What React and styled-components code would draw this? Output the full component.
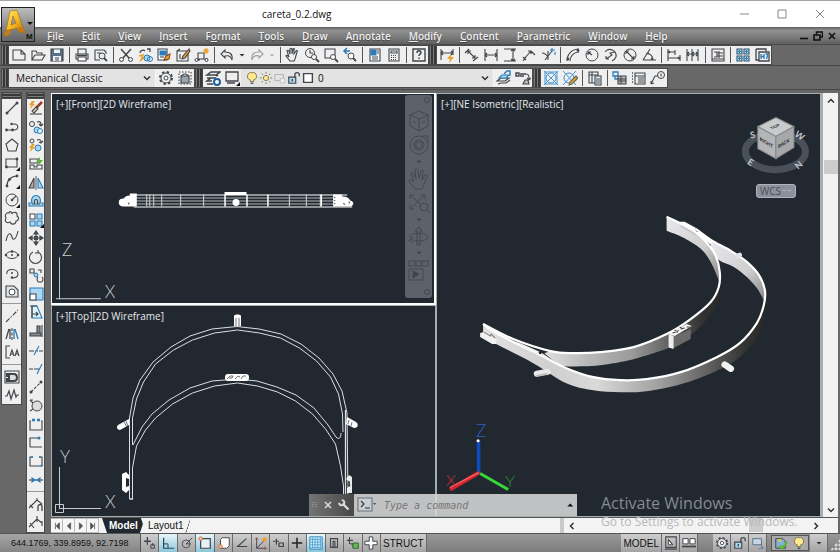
import React from 'react'
import styled, { createGlobalStyle, css } from 'styled-components'

const GlobalStyle = createGlobalStyle`
	* { box-sizing: border-box; }

	body {
		margin: 0;
		font-family: "Open Sans", "Noto Sans", sans-serif;
		font-size: 10px;
		background-color: #686868;
	}

	button, input, select {
		font: inherit;
		color: inherit;
		margin: 0;
		padding: 0;
		border: 0;
		background: none;
	}
`

const INK = '#41464b'
const BLUE = '#2b7cb8'
const SKY = '#a9d8f0'
const GOLD = '#eba12c'

/* eslint-disable react/prop-types */
const P = ( { d, c = INK, f = 'none', w = 1.1, ...rest } ) => (
	<path d={d} stroke={c} fill={f} strokeWidth={w} {...rest}/>
)

const corner = <P d="M16 12v4h-4z" c="none" f="#111"/>
const bolt = <P d="M4 1L1 5h2L2 9l5-5H5l2-3z" c="none" f={GOLD}/>

const icons = {
	new: <P d="M2 3h8l4 4v6H2zM10 3v4h4"/>,
	open: <><P d="M2 13V4h4l1 2h5v2M2 13l3-5h10l-3 5z"/></>,
	save: <><P d="M2 2h12v12H2z" f="#5b6f86"/><P d="M5 2.500h6V6H5zM4 9h8v5H4z" c="none" f="#eef1f4"/><P d="M6 11h4M6 13h4" w={1}/></>,
	print: <><P d="M4 7V2h8v5M2 7h12v5H2z"/><P d="M4 10h8v4H4z" f="#fff"/><P d="M3 8.500h10" w={1.600}/></>,
	preview: <><P d="M7 13H2V3h9l2 2v2M4 6h4"/><circle cx="9" cy="9" r="3" stroke={INK} fill="#dfeaf2"/><P d="M11 11l3 3" w={1.800}/></>,
	cut: <><P d="M3 2l8 9M13 2L5 11" w={1.500}/><circle cx="3.500" cy="12.500" r="2" stroke={INK} fill="none"/><circle cx="12.500" cy="12.500" r="2" stroke={INK} fill="none"/></>,
	copyclip: <><P d="M3 6a3 3 0 0 1 5-2M10 2h3v3" w={1.300}/><P d="M2 9l4-1-2 5 4-3" c={GOLD} w={1.600}/><circle cx="10" cy="11" r="3" stroke={BLUE} fill={SKY}/><circle cx="13" cy="12" r="2.500" stroke={BLUE} fill="none"/></>,
	paste: <><P d="M2 2h9v11H2z" f="#fff"/><P d="M4 4h6v4H4z" f={BLUE} c={BLUE}/><P d="M4 10h4"/><P d="M8 13l2-4 4-2-1 5z" c="#8a4a20" f={GOLD}/></>,
	match: <><P d="M2 4h11v10H2zM2 4l3-2M5 7v5"/><P d="M14 2L8 9l-1 3 3-1 5-7z" f={GOLD}/></>,
	block: <><P d="M4 6h6v6H4zM1 13h5M10 12h4"/><circle cx="2.500" cy="13" r="1.500" stroke={INK} fill="#fff"/><circle cx="12.500" cy="13" r="1.500" stroke={INK} fill="#fff"/><P d="M12 1v6M9 4h6M10 2l4 4M14 2l-4 4" c={GOLD}/></>,
	undo: <P d="M6 3L2 7l4 4V9c4-1 6 0 7 4 1-6-2-8-7-8z"/>,
	redo: <P d="M10 3l4 4-4 4V9c-4-1-6 0-7 4-1-6 2-8 7-8z" c="#9a9da0"/>,
	caret: <P d="M3 6h10l-5 5z" c="none" f="#333"/>,
	caretDim: <P d="M4 7h8l-4 4z" c="none" f="#a0a0a0"/>,
	hand: <P d="M5 14l-4-5c0-1 1-1 2 0l1 1-2-6c0-1 1-1 2 0l1 3V2c0-1 1-1 2 0v5l1-5c1-1 2 0 1 1v4l2-3c1-1 2 0 1 1l-2 7-1 2z"/>,
	zoomRt: <><circle cx="6" cy="6" r="4.500" stroke={INK} fill="none"/><P d="M6 3v3h3"/><circle cx="10" cy="10" r="2.500" stroke={INK} fill="#fff"/><P d="M12 12l3 3" w={1.800}/></>,
	zoomWin: <><P d="M2 2h10v9H2z"/><circle cx="10" cy="10" r="2.500" stroke={INK} fill="#fff"/><P d="M12 12l3 3" w={1.800}/></>,
	zoomPrev: <><P d="M8 4H2M5 1L2 4l3 3" c={BLUE} w={1.500}/><circle cx="9" cy="9" r="3" stroke={INK} fill="#fff"/><P d="M11 11l3 3" w={1.800}/></>,
	props: <><P d="M3 2h10v12H3z" f="#fff"/><P d="M4 3h5v5H4z" c={BLUE} f={BLUE}/><P d="M10 4h2M10 6h2M5 10h6M5 12h6" w={1}/></>,
	calc: <><P d="M3 2h10v12H3z"/><P d="M5 4h6v2H5z" f="#fff"/><P d="M5 8.500h6M5 10.500h6M5 12.500h6" w={1} strokeDasharray="1 1"/></>,
	help: <><P d="M2 2h12v12H2z" w={1.400}/><P d="M6 6c0-3 4-3 4 0 0 1-2 1-2 3M8 10.500v1.500" w={1.500}/></>,
	dimQuick: <><P d="M2 2v11M14 2v6M2 6h12M4 4L2 6l2 2M12 4l2 2-2 2"/><P d="M12 7l-4 5h3l-1 4 5-6h-3z" c="none" f={GOLD}/></>,
	dimAligned: <P d="M4 4l7 7M1 6l4-4M9 14l5-4M4 4h3M4 4v3M11 11H8M11 11V8"/>,
	dimLinear: <P d="M2 2v12M14 2v12M2 8h12M4 6L2 8l2 2M12 6l2 2-2 2"/>,
	dimOrd: <P d="M2 2h12M2 14h12M11 2v12M9 4l2-2 2 2M9 12l2 2 2-2"/>,
	dimArc: <P d="M2 14l3-4M2 10l3 3M3 12L10 4M10 4l4 4M10 4H7M10 4v3"/>,
	dimYx: <><P d="M2 6c3 0 4 1 6 4M8 4v9M12 4L5 13"/><P d="M10 3h5M12 1v4M15 5v3" c={BLUE}/></>,
	dimCurve: <><P d="M2 14C2 7 7 2 14 2M5 14c0-5 4-9 9-9"/><circle cx="3" cy="12" r="1.400" fill={INK}/><circle cx="13" cy="3.500" r="1.400" fill={INK}/></>,
	radius: <><circle cx="8" cy="8" r="6" stroke={INK} fill="none"/><P d="M8 8L4 5M4 5v3M4 5h3"/></>,
	jogged: <P d="M2 5c4-5 12-2 11 5-1 2-2 3-4 4M3 12l6-4-2-2 5-1M3 12v-3M3 12h3"/>,
	diameter: <><circle cx="8" cy="8" r="6" stroke={INK} fill="none"/><P d="M4 4l8 8M4 4v3M4 4h3M12 12V9M12 12H9"/></>,
	angular: <P d="M2 13h13M2 13L9 2M5 7c4-1 7 2 7 6M5 7l3-1M12 13l-2-2"/>,
	baseline: <P d="M2 2v12M9 3v5M2 5h7M2 11h12M14 8v6M4 4L2 5l2 1M12 10l2 1-2 1"/>,
	cont: <P d="M2 2v12M7 2v12M13 2v12M2 7h11M4 5L2 7l2 2M9 5L7 7l2 2M11 5l2 2-2 2"/>,
	space: <P d="M2 2h12v12H2zM4 5h3v5H4M7 6h6M7 9h6M9 4v7M2 12h12"/>,
	grid: <><P d="M2 2h5v5H2zM9 2h5v5H9zM2 9h5v5H2zM9 9h5v5H9z" c="#36506a" f={SKY}/><P d="M4.500 3v3M3 4.500h3M11.500 3v3M10 4.500h3M4.500 10v3M3 11.500h3M11.500 10v3M10 11.500h3" c={BLUE}/></>,
	h7: <><P d="M2 2h10v2M2 2v11h3M5 5h10v9H5z" w={1.300}/><P d="M7 7v5M10 7v5M7 9.500h3M11.500 7H14l-1.500 5" c={BLUE} w={1.300}/></>,
	gear: <><circle cx="8" cy="8" r="6" stroke={INK} strokeWidth="2" strokeDasharray="2.400 2.310" fill="none"/><circle cx="8" cy="8" r="5" stroke={INK} fill="#eee"/><circle cx="8" cy="8" r="2" stroke={INK} fill="#fff"/></>,
	workspace: <><P d="M2 2h12v12H2z" strokeDasharray="1.500 1.500"/><P d="M4 6h8v7H4z" f="#9aa4ad"/><P d="M4 6l3-2h2l3 2"/></>,
	layers: <><P d="M6 2h9l-4 3H2zM11 6l2-1M2 8h7M11 8H6L2 11h5M2 14h6" w={1.400}/><circle cx="12" cy="12" r="3" fill="#fff" stroke="#1b5f9a" strokeWidth="2"/></>,
	screen: <><P d="M2 2h12v9H2z" w={1.300}/><P d="M3 13h8" w={1.500}/>{corner}</>,
	bulb: <><P d="M8 2a4 4 0 0 1 2 8v2H6v-2a4 4 0 0 1 2-8z" c="#83764e" f="#ffe98f"/><P d="M6.500 14h3" w={1.500}/></>,
	sun: <><circle cx="8" cy="8" r="3" stroke="#83764e" fill="#ffe98f"/><P d="M8 1v2M8 13v2M1 8h2M13 8h2M3 3l1.500 1.500M11.500 11.500L13 13M13 3l-1.500 1.500M4.500 11.500L3 13" c="#83764e"/></>,
	vpFreeze: <><P d="M2 4h10v7H2z" c="#b3b3b3"/><circle cx="11" cy="11" r="3" stroke="#b3b3b3" fill="#eee"/></>,
	unlock: <><P d="M2 7h8v7H2z" f={SKY} w={1.300}/><P d="M9 7V4c0-3 5-3 5 0v2M6 9v3" w={1.500}/></>,
	swatch: <P d="M3 3h10v10H3z" f="#fff" w={1.600}/>,
	layerSt: <><P d="M1 11l4-3h8l-4 3zM2 14l3-1h5l4-3" w={1.200}/><P d="M3 8l3-3h7l-3 3z" f={SKY} c={BLUE}/><P d="M8 4l3-3h3v5" c={BLUE} w={1.400}/></>,
	layerPrev: <><P d="M1 3h3v3H1zM5 4h6M5 6h4" w={1.400}/><P d="M11 4c3 0 3 2 3 5M12 8l2 2 2-2"/><P d="M8 14l2-4h3l1 4z" f="#bbb"/></>,
	center: <><circle cx="8" cy="8" r="5" stroke="#3a8fd0" fill="none"/><P d="M1 1l14 14M15 1L1 15M2 2h12v12H2z" c="#3a8fd0" w={0.900}/></>,
	centerEd: <><circle cx="7" cy="8" r="5" stroke="#3a8fd0" fill="none"/><P d="M1 1l13 14M14 1L1 15" c="#3a8fd0" w={0.900}/><P d="M14 6l-6 6-1 3 3-1 6-6z" c="#665" f={GOLD}/></>,
	bom: <><P d="M2 2h9v11H2zM2 5h9M5 2v11"/><P d="M8 6h6v9H8z" f="#d9e8f2"/><P d="M9 9h4M9 11h4M9 13h4" w={0.900}/></>,
	partRef: <><P d="M1 2h5v4H1zM3 6v3h4" c={BLUE} w={1.300}/><P d="M6 6h8v8H6zM6 9h8M6 11h8M9 6v8" f="#bbb"/></>,
	partList: <><P d="M4 3h10v11H4zM4 6h10M7 8h6M7 10h6M7 12h6"/><P d="M1 3h1M1 6h1M1 9h1M1 12h1" w={1.500}/></>,
	balloon: <><circle cx="11" cy="5" r="3.500" stroke={INK} fill="none"/><P d="M11 3.500v3M1 14l4-8h3M1 14v-3M1 14l3-1"/></>,

	line: <><P d="M3 13L13 3"/><circle cx="3" cy="13" r="1.500" fill={INK}/><circle cx="13" cy="3" r="1.500" fill={INK}/></>,
	pline: <><P d="M2 12h8c5 0 5-6 0-6H8"/><circle cx="2.500" cy="12" r="1.400" fill={INK}/><circle cx="8.500" cy="12" r="1.400" fill={INK}/><circle cx="7.500" cy="6" r="1.200" fill={INK}/></>,
	polygon: <P d="M8 2l6 5-2 7H4L2 7z"/>,
	rect: <><P d="M2 4h11v8H2z"/><circle cx="2.500" cy="12" r="1.400" fill={INK}/><circle cx="13" cy="4" r="1.400" fill={INK}/>{corner}</>,
	arc: <><P d="M3 13C3 7 7 3 13 3"/><circle cx="3" cy="13" r="1.400" fill={INK}/><circle cx="5.500" cy="6.500" r="1.400" fill={INK}/><circle cx="13" cy="3" r="1.400" fill={INK}/>{corner}</>,
	circle: <><circle cx="8" cy="8" r="6" stroke={INK} fill="none"/><circle cx="8" cy="8" r="1.300" fill={INK}/><P d="M8 8l4-4"/>{corner}</>,
	revcloud: <P d="M8 4c1-3 6-2 5 2 3 2 1 5-1 5 0 4-5 4-6 1-3 2-6-1-4-4-2-3 1-6 3-5 0-2 3-2 3 1z"/>,
	spline: <P d="M2 13C4 3 7 5 8 9s4 3 6-6"/>,
	ellipse: <><ellipse cx="8" cy="8" rx="6" ry="3.500" stroke={INK} fill="none"/><circle cx="2" cy="8" r="1.300" fill={INK}/><circle cx="8" cy="8" r="1" fill={INK}/><circle cx="14" cy="8" r="1.300" fill={INK}/><circle cx="8" cy="4.500" r="1.300" fill={INK}/></>,
	ellArc: <><P d="M3 9c-2-6 11-6 11 0 0 3-3 4-6 4"/><circle cx="8" cy="12.500" r="1.300" fill={INK}/><circle cx="8" cy="8" r="1" fill={INK}/></>,
	region: <><P d="M2 3h8l4 4v7H2z" f="#dfe5e8"/><circle cx="8" cy="9" r="3" stroke={INK} fill="#fff"/></>,
	cline: <P d="M2 14L14 2" strokeDasharray="5 1.500 1.500 1.500"/>,
	symline: <><P d="M8 2v12" strokeDasharray="3 1.500"/><P d="M5 3L2 13M6 3v10" w={1.300}/><P d="M11 3l3 10M10 3v10" c={BLUE} w={1.300}/></>,
	section: <P d="M6 2H2v12h4M6 12l2-6 2 6M7 10h2M11 12l2-6 2 6M12 10h2"/>,
	hidesit: <><P d="M1 2h14v12H1z"/><P d="M3 5h7c4 0 4 7 0 7H3v-2h2V7H3z" f="#ddd" w={2}/></>,
	zigzag: <P d="M1 9h2l2-5 2 8 3-9 2 7 1-2h2" w={1.200}/>,

	erase: <><P d="M4 1L1 5h2L2 9l5-5H5l2-3z" c="none" f={GOLD}/><P d="M14 2L8 8" c="#a33b22" w={2.500}/><P d="M8 7l2 2-4 4-2-2z" f="#e6c9b9"/><P d="M2 14h12" /></>,
	copy: <><circle cx="4" cy="5" r="2.500" stroke={INK} fill="none"/><P d="M9 3c3-1 4 0 4 3M11 5l2 2 2-2"/><circle cx="9" cy="11" r="3" stroke={BLUE} fill={SKY}/><circle cx="12" cy="12" r="2.500" stroke={BLUE} fill="#e4f3fb"/></>,
	pcopy: <><circle cx="4" cy="4" r="2" stroke={INK} fill="none"/><P d="M9 3c3-1 4 0 4 2M11 5l2 1 2-2"/><g transform="translate(0 6)">{bolt}</g><circle cx="10" cy="11" r="3" stroke={BLUE} fill={SKY}/></>,
	pview: <><P d="M2 3h8v4H2zM2 13h12V9H9v2H6V9H2z"/><P d="M12 1L8 6h3l-1 4 5-6h-3z" c="none" f="#5db33c"/></>,
	mirror: <><P d="M6 3v10H1z" f="#aaa"/><P d="M10 3v10h5z" c={BLUE} f={SKY}/><P d="M8 1v14" w={0.900}/></>,
	offset: <><P d="M1 13h14v-3h-3c3-10-11-10-8 0H1z" c={BLUE} f={SKY}/><P d="M4 11h3c-3-6 5-6 2 0h3"/></>,
	array: <><P d="M2 2h5v5H2z" f="#fff"/><P d="M9 2h5v5H9zM2 9h5v5H2zM9 9h5v5H9z" c={BLUE} f={SKY}/>{corner}</>,
	move: <P d="M8 1L6 4h4zM8 15l-2-3h4zM1 8l3-2v4zM15 8l-3-2v4zM6.500 6.500h3v3h-3zM8 3v3M8 10v3M3 8h3M10 8h3" w={1.200} f="#555"/>,
	rotate: <P d="M10 3a6 6 0 1 1-5 0M10 1v3H7"/>,
	powerScale: <><P d="M2 2h4v4H2zM6 6l3 3"/><circle cx="8" cy="8" r="2" stroke={BLUE} fill={SKY}/><P d="M10 3h3v3M14 10a3 3 0 1 1-4 0"/></>,
	scale: <><P d="M2 2h13v12H2z" c={BLUE} f={SKY}/><P d="M2 8h6v6H2z" f="#fff"/></>,
	stretch: <><P d="M4 2h5l5 12H4z" c={BLUE} f="#dff0fa"/><P d="M2 2h7M4 2v12M4 10h6M8 8l2 2-2 2"/></>,
	align: <><P d="M9 3h3v7H9zM2 10h11v3H2z" f="#888"/><P d="M14 2v12"/></>,
	trim: <><P d="M1 9h4M11 9h4" w={1.200}/><P d="M5 9h6" strokeDasharray="1 1"/><P d="M11 4l-5 9" c={BLUE}/></>,
	extend: <><P d="M1 9h4M6 9h5" w={1.200}/><P d="M14 4L9 14" c={BLUE}/></>,
	breakPt: <><P d="M3 13L13 3" strokeDasharray="3 1.500"/><circle cx="3" cy="13" r="1.500" fill={INK}/><circle cx="13" cy="3" r="1.500" fill={INK}/></>,
	hole: <><circle cx="9" cy="9" r="5" stroke={INK} fill="#ddd"/><P d="M2 3h3M2 14l3-2M2 3l3 3"/></>,
	breakAt: <><P d="M3 5H2v9h12V5h-1"/><P d="M4 4h3M9 4h3" c={BLUE} w={2.500}/></>,
	join: <><P d="M2 13V4h8M2 13h12"/><circle cx="11" cy="4" r="1.500" fill={BLUE}/></>,
	chamfer: <><P d="M3 4H2v9h12V4h-1"/><P d="M4 3v2M12 3v2M13 13l1-1" c={BLUE} w={1.800}/></>,
	merge: <><P d="M1 8h14"/><P d="M4 6l3 2-3 2zM12 6L9 8l3 2z" c={BLUE} f={BLUE}/></>,
	dimN: <><P d="M1 12l8-8 5 4M2 9l3 3M9 2v3"/><P d="M10 15v-5c1-2 4-2 4 0v5" w={1.300}/></>,
	dimE: <P d="M1 12l8-8 5 4M2 8l4 5M9 1v6M14 6v5"/>,

	infer: <><P d="M5 1v9M1 6h8" w={1.500}/><P d="M9 10h4v4H9zM11 8v3"/></>,
	snapGrid: <><P d="M3 2v12h12" c="#2a4a5a" w={1.400}/><P d="M3 9h5v5" c="#2a4a5a"/></>,
	polar: <><circle cx="7" cy="9" r="4.500" stroke={INK} fill="none"/><P d="M7 9l7-7M7 9h5"/></>,
	osnap: <><P d="M3 3h11v11H3z" f="#e7f2f7" w={1.400}/><circle cx="3" cy="3" r="2" stroke="#d06030" fill="#ffc9a8"/></>,
	osnap3: <><P d="M4 4l2-2h8v9l-3 3H4z" f="#fff"/><circle cx="4" cy="12" r="2" stroke="#d06030" fill="#ffc9a8"/></>,
	angle: <P d="M13 3L3 12h11" w={1.300}/>,
	ucs: <><P d="M3 2v12h11M3 14L12 5" c="#445"/><circle cx="12" cy="4" r="2.500" fill={GOLD}/><P d="M1 4l2-2 2 2M12 12l2 2-2 2" c="#c05030"/></>,
	dyn: <P d="M1 6h7M5 3v7M8 8h5v4H8z" w={1.400}/>,
	lwt: <P d="M8 2v12M2 8h12" w={1.700} c="#222"/>,
	tpy: <><P d="M1 1h14v14H1z" c={BLUE} f="#d5ecf8"/><P d="M2 4h12M2 7h12M2 10h12M2 13h12M4 2v12M7 2v12M10 2v12M13 2v12" c="#4fa3d1" w={1}/></>,
	qp: <P d="M4 3h8v10H4zM7 6h2v7H7z" w={1.300}/>,
	sc: <><P d="M1 5h7M4 1v8M5 9h3v4" w={1.200}/><P d="M8 8h6v6H8z" c="#2d6e2d" f="#6ab85d"/></>,
	am: <P d="M6 1h4v5h5v4h-5v5H6v-5H1V6h5z" f="#fff"/>,
	modelSp: <><P d="M2 1h12v12H2zM1 15h14" w={1.200}/><P d="M5 4v6h5zM5 4l5 6" f="#fff"/></>,
	layouts: <><P d="M1 3h6v6H1zM9 3h6v6H9z" f="#fff"/><P d="M0 12h16" w={2}/></>,
	annot: <><P d="M2 3h10v7H2z" f="#c9d5e2" c="#56708c"/><P d="M12 8v3l2 3h-3l-2 1" c="#56708c"/></>,
	tray: <><P d="M2 3h8l3 3v8H2z" f="#7fb2d9"/><P d="M3 4l5 4V3z" f="#e8c14c" c="none"/><P d="M6 11l3 3 6-7" c="#5ebb2f" w={2.600}/></>,
	wrench: <><P d="M6 6l8 8" c="#ddd" w={3}/><P d="M5 1.500a3.500 3.500 0 1 1-3.500 3.500" c="#ddd" w={2.400}/></>,
	prompt: <><P d="M1 1h14v13H1z" c="#6a747e" f="#c9ced3"/><P d="M4 4l3 3-3 3M8 11h5" c="#333"/></>
}

const Glyph = styled.svg`
	display: block;
	flex: none;
	width: ${props => props.$size || 14}px;
	height: ${props => props.$size || 14}px;
`

const Icon = ( { name, size } ) => (
	<Glyph $size={size} viewBox="0 0 16 16" aria-hidden="true">{icons[name]}</Glyph>
)

const Shell = styled.div`
	display: flex;
	flex-direction: column;
	position: relative;
	height: 100vh;
	min-height: 480px;
	border-top: 1px solid #a6a6a6;
	background-color: #686868;
	overflow: hidden;
`

const TitleBar = styled.header`
	flex: none;
	display: grid;
	grid-template-columns: 1fr auto 1fr;
	align-items: center;
	height: 26px;
	padding-left: 40px;
	background-color: #fff;
	color: #111;
`

const Title = styled.h1`
	margin: 0;
	font-size: 10px;
	font-weight: 400;
	grid-column: 1 / 4;
	grid-row: 1;
	padding-left: 222px;
`

const WindowButtons = styled.div`
	grid-column: 3;
	grid-row: 1;
	display: flex;
	justify-content: flex-end;
	padding-right: 1px;
`

const WindowButton = styled.button`
	display: grid;
	place-items: center;
	width: 38px;
	height: 24px;
`

const AppButton = styled.button`
	position: absolute;
	top: 6px;
	left: 1px;
	width: 34px;
	height: 35px;
	border: 1px solid #222;
	background: linear-gradient(#bdbdbd, #858585 60%, #666);
	z-index: 2;
`

const MenuBar = styled.nav`
	flex: none;
	display: flex;
	align-items: center;
	height: 18px;
	padding-left: 47px;
	background: linear-gradient(#5d5d5d, #929292 20%, #7b7b7b 60%, #5f5f5f);
	border-bottom: 1px solid #4b4b4b;
	color: #f0f0f0;
`

const MenuItem = styled.button`
	font-size: 10px;
	font-weight: 600;
	line-height: 16px;
	margin-right: 18px;
	text-shadow: 0 1px 1px #444;
`

const MdiButtons = styled.div`
	display: flex;
	gap: 4px;
	margin-left: auto;
	padding-right: 3px;
	color: #111;
`

const ToolRow = styled.div`
	flex: none;
	display: flex;
	align-items: center;
	height: ${props => props.$height}px;
	padding-left: 1px;
	border-bottom: 1px solid #474747;
`

const Grip = styled.span`
	flex: none;
	background: repeating-linear-gradient(${props => props.$across ? '180deg' : '90deg'}, #7a7a7a 0 1px, #383838 1px 3px);
	border: 1px solid #4a4a4a;
	${props => props.$across ? css`height: 7px;` : css`width: 8px; height: 20px;`}
`

const Panel = styled.div`
	display: flex;
	align-items: center;
	height: 20px;
	border: 1px solid #4a4a4a;
	border-width: 1px 1px 1px 0;
	background-color: #efefef;
	${props => props.$shrink && css`min-width: 0; flex: 0 1 330px;`}
`

const ToolButton = styled.button`
	flex: none;
	display: grid;
	place-items: center;
	width: ${props => props.$narrow ? 11 : 19}px;
	height: 18px;
`

const Separator = styled.span`
	flex: none;
	width: 6px;
	height: 16px;
	background: linear-gradient(#555, #555) center / 1px 100% no-repeat;
`

const Combo = styled.label`
	display: flex;
	align-items: center;
	flex: ${props => props.$wide ? '1 1 auto' : '0 0 147px'};
	min-width: 0;
	height: 18px;
	padding: 0 4px;
	background-color: #e3e3e3;
	border-right: 1px solid #f8f8f8;
	color: #111;
`

const Select = styled.select`
	appearance: none;
	flex: 1;
	min-width: 0;
	height: 18px;
	padding-left: 3px;
	font-size: 10px;
	outline: 0;
`

const Workspace = styled.main`
	flex: 1;
	min-height: 0;
	display: flex;
	padding-top: 2px;
	gap: 4px;
	padding-right: 2px;
	padding-left: 1px;
`

const SideBar = styled.div`
	flex: none;
	width: ${props => props.$width}px;
	height: ${props => props.$height};
	display: flex;
	flex-direction: column;
	border: 1px solid #4a4a4a;
	border-top: 0;
	background-color: #efefef;
`

const SideButton = styled.button`
	flex: 1 1 0;
	min-height: 0;
	display: grid;
	place-items: center;
`

const SideRule = styled.span`
	flex: none;
	height: 6px;
	background: linear-gradient(#999, #999) center / 100% 1px no-repeat;
`

const Canvas = styled.div`
	flex: 1;
	min-width: 0;
	margin-left: 2px;
	display: grid;
	grid-template-columns: 1fr 15px;
	grid-template-rows: 1fr 16px;
	position: relative;
	padding-top: 1px;
`

const Views = styled.div`
	display: grid;
	grid-template-columns: 1fr 1fr;
	grid-template-rows: 1fr 1fr;
	min-width: 0;
	min-height: 0;
	border-right: 2px solid #a5adad;
	background-color: #a5adad;
`

const View = styled.section`
	position: relative;
	min-width: 0;
	min-height: 0;
	overflow: hidden;
	border: 1px solid ${props => props.$active ? '#fff' : '#a5adad'};
	border-width: ${props => props.$active ? '1px 2px 2px 1px' : '1px 1px 1px 1px'};
	background-color: #212830;
	grid-row: ${props => props.$tall ? 'span 2' : 'auto'};
	order: ${props => props.$order};
`

const ViewLabel = styled.button`
	position: absolute;
	top: 3px;
	left: 4px;
	font-size: 10px;
	line-height: 14px;
	color: #e6e8ea;
`

const Drawing = styled.svg`
	display: block;
	width: 100%;
	height: 100%;

	text {
		font-family: Lato, "Liberation Sans", sans-serif;
		font-weight: 300;
	}

	.compass text {
		font-weight: 700;
	}
`

const NavBar = styled.div`
	position: absolute;
	top: 1px;
	right: 2px;
	width: 27px;
	height: 203px;
	max-height: 98%;
	border-radius: 3px;
	background-color: #5c616a;
`

const VScroll = styled.div`
	display: flex;
	flex-direction: column;
	align-items: center;
	justify-content: space-between;
	background-color: #f2f2f2;
	color: #222;
`

const ScrollButton = styled.button`
	display: grid;
	place-items: center;
	width: 15px;
	height: 15px;
`

const ThumbTrack = styled.div`
	flex: 1;
	align-self: stretch;
	display: flex;
	flex-direction: ${props => props.$vertical ? 'column' : 'row'};
`

const Thumb = styled.span`
	width: 14px;
	height: 14px;
	margin: ${props => props.$offset};
	background-color: #cdcdcd;
`

const BottomRow = styled.div`
	grid-column: 1 / 3;
	display: flex;
	align-items: center;
	background-color: #f3f3f3;
	border-top: 1px solid #555;
`

const TabNav = styled.button`
	display: grid;
	place-items: center;
	width: 12px;
	height: 15px;
	background-color: #f6f6f6;
	border: 1px solid #bbb;
	border-left: 0;
`

const Tab = styled.button`
	height: 15px;
	padding: 0 7px;
	margin-left: ${props => props.$active ? 3 : -4}px;
	font-family: "Liberation Sans", sans-serif;
	font-size: 10px;
	line-height: 14px;
	font-weight: ${props => props.$active ? 700 : 400};
	color: ${props => props.$active ? '#fff' : '#111'};
	background-color: ${props => props.$active ? '#212830' : '#f3f3f3'};
	clip-path: polygon(0 0, 100% 0, calc(100% - 5px) 100%, 5px 100%);
`

const TabSlash = styled.span`
	width: 5px;
	height: 15px;
	margin-left: -5px;
	background: linear-gradient(108deg, transparent 45%, #555 46% 60%, transparent 61%);
`

const HScroll = styled.div`
	flex: 0 0 263px;
	height: 15px;
	margin-left: auto;
	margin-right: 15px;
	display: flex;
	align-items: center;
	border-left: 4px solid #cacaca;
`

const CommandLine = styled.form`
	position: absolute;
	left: 258px;
	bottom: 17px;
	width: 268px;
	height: 22px;
	display: flex;
	align-items: stretch;
	background-color: rgba(214, 214, 214, .88);
`

const CommandTools = styled.div`
	flex: 0 0 45px;
	display: flex;
	align-items: center;
	gap: 4px;
	padding-left: 3px;
	background: linear-gradient(90deg, #747474, #484848);
`

const CommandButton = styled.button`
	display: grid;
	place-items: center;
`

const CommandInput = styled.input`
	flex: 1;
	min-width: 0;
	padding-left: 8px;
	font: italic 10px "DejaVu Sans Mono", monospace;
	outline: 0;

	&::placeholder {
		color: #777;
		opacity: 1;
	}
`

const Watermark = styled.div`
	position: absolute;
	right: 35px;
	bottom: 3px;
	width: 202px;
	pointer-events: none;
	white-space: nowrap;
`

const WatermarkTitle = styled.p`
	margin: 0;
	font-size: 16px;
	line-height: 22px;
	color: #858b91;
`

const WatermarkText = styled.p`
	margin: 0;
	font-size: 12px;
	line-height: 16px;
	color: #b7b9bb;
`

const StatusBar = styled.footer`
	flex: none;
	display: flex;
	align-items: center;
	height: 19px;
	border-top: 1px solid #555;
	background: linear-gradient(#999, #7c7c7c);
	color: #111;
	font-family: "Liberation Sans", sans-serif;
	font-size: 10px;
`

const Coords = styled.output`
	flex: 0 0 141px;
	padding-left: 11px;
	font-size: 9px;
	line-height: 18px;
	background: linear-gradient(#a5a5a5, #858585);
	border-right: 1px solid #555;
`

const StatusGroup = styled.div`
	display: flex;
	height: 18px;
	flex: ${props => props.$width ? `0 0 ${props.$width}px` : 'none'};
	margin-left: ${props => props.$end ? 'auto' : `${props.$gap || 0}px`};
`

const StatusButton = styled.button`
	flex: 1 1 auto;
	min-width: 18px;
	display: grid;
	place-items: center;
	padding: 0 ${props => props.$text ? 2 : 0}px;
	font-size: 10px;
	border-right: 1px solid #6a6a6a;
	background: ${props => props.$on ? 'linear-gradient(#e8f6fb, #8cc7da)' : 'linear-gradient(#cfcfcf, #a3a3a3)'};
`

const Tray = styled.div`
	display: flex;
	align-items: center;
	gap: 4px;
	width: 38px;
	height: 16px;
	margin-left: 4px;
	padding: 0 2px;
	border: 1px solid #555;
	background-color: #aaa;
`

const ResizeGrip = styled.span`
	width: 10px;
	height: 12px;
	margin: 3px 0 0 2px;
	clip-path: polygon(100% 0, 100% 100%, 0 100%);
	background: radial-gradient(#ddd 1px, transparent 2px) 0 0 / 4px 4px;
`

const menus = [
	[ 'F', 'ile' ], [ 'E', 'dit' ], [ 'V', 'iew' ], [ 'I', 'nsert' ], [ 'F', 'o', 'rmat' ], [ 'T', 'ools' ], [ 'D', 'raw' ],
	[ 'A', 'n', 'notate' ], [ 'M', 'odify' ], [ 'C', 'ontent' ], [ 'P', 'arametric' ], [ 'W', 'indow' ], [ 'H', 'elp' ]
]

const standard = [ 'new', 'open', 'save', '|', 'print', 'preview', '|', 'cut', 'copyclip', 'paste', 'match', 'block', '|', 'undo', 'caret', 'redo', 'caretDim', '|', 'hand', 'zoomRt', 'zoomWin', 'zoomPrev', '|', 'props', 'calc', '|', 'help' ]
const dimension = [ 'dimQuick', '|', 'dimAligned', 'dimLinear', 'dimOrd', 'dimArc', 'dimYx', '|', 'dimCurve', 'radius', 'jogged', 'diameter', 'angular', '|', 'baseline', 'cont', '|', 'space', '|', 'grid', 'h7' ]
const draw = [ 'line', 'pline', 'polygon', 'rect', 'arc', 'circle', 'revcloud', 'spline', 'ellipse', 'ellArc', 'region', '|', 'cline', 'symline', 'section', '|', 'hidesit', 'zigzag' ]
const modify = [ 'erase', 'copy', 'pcopy', 'pview', 'mirror', 'offset', 'array', 'move', 'rotate', 'powerScale', 'scale', 'stretch', 'align', 'trim', 'extend', 'breakPt', 'hole', 'breakAt', 'join', 'chamfer', 'merge', '|', 'dimN', 'dimE' ]
const toggles = [ 'infer', 'snapGrid', 'polar', 'osnap', 'osnap3', 'angle', 'ucs', 'dyn', 'lwt', 'tpy', 'qp', 'sc', 'am' ]
const toggled = [ 'snapGrid', 'osnap', 'tpy' ]

const Tools = ( { items } ) => items.map( ( name, i ) => (
	name === '|'
		? <Separator key={i}/>
		: <ToolButton key={i} aria-label={name} $narrow={name.startsWith( 'caret' )}><Icon name={name} size={name.startsWith( 'caret' ) ? 8 : 16}/></ToolButton>
) )

const Side = ( { items, width, height } ) => (
	<SideBar $width={width} $height={height}>
		<Grip $across/>
		{items.map( ( name, i ) => (
			name === '|' ? <SideRule key={i}/> : <SideButton key={i} aria-label={name}><Icon name={name} size={16}/></SideButton>
		) )}
	</SideBar>
)

const Chevron = ( { turn = 0 } ) => (
	<Glyph $size={8} viewBox="0 0 8 8" aria-hidden="true">
		<path d="M1 2.500l3 3 3-3" fill="none" stroke="#333" strokeWidth="1.500" transform={`rotate(${turn} 4 4)`}/>
	</Glyph>
)

const Logo = () => (
	<svg width="32" height="33" viewBox="0 0 32 33" aria-hidden="true">
		<defs>
			<linearGradient id="gold" x1="0" y1="0" x2="1" y2="1">
				<stop offset="0" stopColor="#fff27a"/>
				<stop offset=".5" stopColor="#f6b81f"/>
				<stop offset="1" stopColor="#b35c08"/>
			</linearGradient>
		</defs>
		<path d="M8 3l7-1 6 18 2 5-6-1-2-4-7 2-1 5-5 1 2-5zM11 8l-2 9 5-2z" fill="url(#gold)" fillRule="evenodd" stroke="#9b6410" strokeWidth=".6"/>
		<path d="M4 22l5-1-1 5-5 2zM16 19l5 1 2 5-5-1z" fill="#c97a10"/>
		<path d="M25 14h6l-3 3z" fill="#111"/>
		<text x="24" y="31" fontFamily="Liberation Sans" fontWeight="700" fontSize="8" fill="#111">M</text>
	</svg>
)

const FrontDrawing = () => (
	<Drawing viewBox="52 95 383 208" preserveAspectRatio="xMinYMid meet">
		<g stroke="#fff" fill="none">
			<path d="M134 195.500h214M134 207.500h219" strokeWidth="1.200"/>
			<path d="M134 198.500h214M134 201.500h214M134 204.500h214" stroke="#b4b8bc"/>
			<path d="M147 195v12M150 195v12M154 195v12M162 195v12M181 195v12M204 195v12M290 195v12M307 195v12M321 195v12" stroke="#d4d6d8"/>
			<path d="M225.500 195v12M247.500 195v12M268.500 195v12M322 195v12M335 195v12" strokeWidth="1.500"/>
		</g>
		<path d="M119 203c0-3 2-4 5-4 1-2 3-3 6-3v-2h7v13h-13c-3 0-5-1-5-4zM334 195h9v2c5 0 7 2 8 4 4 1 4 4 1 6h-18z" fill="#fff"/>
		<path d="M225 192.500h22v3h-22z" fill="#fff"/>
		<circle cx="236.500" cy="203" r="3.500" fill="#fff"/>
		<path d="M335 198h1M335 201h1M335 204h1M344 204l2 1M350 202v2M129 203v2" stroke="#333"/>
		<path d="M59.500 258v42M56 299.500h45" stroke="#c8ccd0" strokeWidth="1" fill="none"/>
		<text x="62" y="257" fontSize="17" fill="#c8ccd0">Z</text>
		<text x="105" y="299" fontSize="17" fill="#c8ccd0">X</text>
	</Drawing>
)

const TopDrawing = () => (
	<Drawing viewBox="52 307 383 208" preserveAspectRatio="xMinYMid meet">
		<g stroke="#dcdfe1" fill="none">
			<path d="M129.500 499V418L133 398l7-18 13-18 18-15 19-11 22-7 25-2.500 22 2.500 22 5 20 10 18 14 14 16 9 17 5 22 1 85"/>
			<path d="M132.500 445V418l4-19 7-17 12-18 18-14 19-10 22-7 23-3 22 3 21 5 19 10 17 13 14 16 8 17 4 20 .5 18"/>
			<path d="M133 445l9-18 10-13 17-14 21-12 22-7 25-2 20 2 20 6 19 8 18 13 14 17 8 12c3 3 5 1 5-4"/>
			<path d="M132.500 499v-31l4-22 9-16 10-12 17-14 20-11 22-7 23-3 20 3 20 6 18 9 17 13 13 15 10 15 5 22 3 20v14"/>
			<path d="M129.500 499h3.500M345.500 410v90" strokeWidth="1.300"/>
		</g>
		<g fill="#fff">
			<path d="M234 326v-10c0-2 7-2 7 0v10z"/>
			<path d="M118 425l11-6v6l-9 5c-3 0-4-3-2-5zM347 417l9 5c3 2 2 6-2 6l-8-4z"/>
			<path d="M122 474l4-2 3 3v4l-3-1v9l3-1v4l-3 3-4-3z"/>
			<path d="M352 477v16h-5v-5l3-2v-4l-4-3 3-4z" opacity=".9"/>
			<rect x="225" y="374" width="24" height="7" rx="3"/>
		</g>
		<path d="M236 318v8M239 318v8M124 422l3 5M126 421l2 5M349 420l-1 4M352 422l-1 4M227 379l3-3h3l-1 2h-3M235 379l3-3 2 1M241 379l2-3h3M349 481l-2 4 3 1z" stroke="#4a5057" fill="none" strokeWidth=".8"/>
		<g stroke="#c8ccd0" fill="none">
			<path d="M59.500 467v42M59 508.500h42M55.500 504.500h8v8h-8z"/>
		</g>
		<text x="60" y="463" fontSize="17" fill="#c8ccd0">Y</text>
		<text x="105" y="508" fontSize="17" fill="#c8ccd0">X</text>
	</Drawing>
)

// Catmull-Rom through the points, as cubic segments
const curve = ( pts, start = 'M' ) => pts.reduce( ( d, p, i ) => {

	if ( i === 0 ) {
		return `${start}${p}`
	}

	const a = pts[i - 1]
	const before = pts[i - 2] || a
	const after = pts[i + 1] || p

	const c1 = [ a[0] + ( p[0] - before[0] ) / 6, a[1] + ( p[1] - before[1] ) / 6 ]
	const c2 = [ p[0] - ( after[0] - a[0] ) / 6, p[1] - ( after[1] - a[1] ) / 6 ]

	return `${d}C${c1} ${c2} ${p}`

}, '' )

const band = ( top, bottom ) => `${curve( top )}${curve( [ ...bottom ].reverse(), 'L' )}Z`

const outerTop = [ [ 485, 324 ], [ 498, 333 ], [ 542, 355 ], [ 568, 368 ], [ 595, 377 ], [ 622, 380 ], [ 648, 379 ], [ 682, 372 ], [ 718, 357 ], [ 741, 343 ], [ 758, 323 ], [ 765, 305 ], [ 766, 290 ], [ 760, 275 ], [ 748, 262 ], [ 732, 251 ], [ 712, 240 ], [ 697, 229 ] ]
const outerBottom = [ [ 485, 337 ], [ 498, 344 ], [ 535, 363 ], [ 568, 383 ], [ 595, 390 ], [ 622, 392 ], [ 648, 391 ], [ 682, 384 ], [ 715, 372 ], [ 741, 357 ], [ 758, 337 ], [ 765, 318 ], [ 767, 290 ] ]
const outerInside = [ [ 765, 300 ], [ 758, 288 ], [ 748, 277 ], [ 735, 267 ], [ 720, 260 ], [ 712, 250 ] ]
const innerTop = [ [ 485, 324 ], [ 515, 339 ], [ 552, 351 ], [ 575, 353 ], [ 602, 352 ], [ 635, 347 ], [ 668, 334 ], [ 692, 319 ], [ 712, 302 ], [ 720, 287 ], [ 721, 272 ], [ 717, 256 ], [ 708, 243 ], [ 694, 230 ], [ 668, 217 ] ]
const innerBottom = [ [ 546, 353 ], [ 563, 365 ], [ 582, 366 ], [ 602, 365 ], [ 635, 359 ], [ 670, 348 ], [ 690, 337 ], [ 709, 318 ], [ 720, 299 ], [ 722, 272 ] ]
const innerInside = [ [ 720, 280 ], [ 712, 262 ], [ 702, 249 ], [ 685, 238 ], [ 668, 231 ] ]

const SolidDrawing = () => (
	<Drawing viewBox="439 95 382 420" preserveAspectRatio="xMinYMid meet">
		<defs>
			<linearGradient id="outer" gradientUnits="userSpaceOnUse" x1="485" y1="0" x2="768" y2="0">
				<stop offset="0" stopColor="#e2e2e2"/>
				<stop offset=".25" stopColor="#cfcfcf"/>
				<stop offset=".4" stopColor="#d9d9d9"/>
				<stop offset=".62" stopColor="#a0a0a0"/>
				<stop offset=".8" stopColor="#5e5e5d"/>
				<stop offset=".92" stopColor="#343433"/>
				<stop offset="1" stopColor="#282827"/>
			</linearGradient>
			<linearGradient id="inner" gradientUnits="userSpaceOnUse" x1="545" y1="0" x2="722" y2="0">
				<stop offset="0" stopColor="#e0e0e0"/>
				<stop offset=".25" stopColor="#b8b8b8"/>
				<stop offset=".5" stopColor="#9a9a9a"/>
				<stop offset=".7" stopColor="#646463"/>
				<stop offset=".9" stopColor="#31312f"/>
				<stop offset="1" stopColor="#282827"/>
			</linearGradient>
			<linearGradient id="inside" x1="0" y1="0" x2="1" y2="1">
				<stop offset="0" stopColor="#e9e9ee"/>
				<stop offset=".6" stopColor="#cfcfcf"/>
				<stop offset="1" stopColor="#8a8a8a"/>
			</linearGradient>
		</defs>
		<path d={band( outerTop.slice( 12, 17 ), outerInside.slice().reverse().reverse() )} fill="url(#inside)"/>
		<path d={band( innerTop.slice( 2, 11 ), innerBottom )} fill="url(#inner)"/>
		<path d={band( innerTop.slice( 10 ), innerInside )} fill="url(#inside)"/>
		<path d={curve( innerTop )} fill="none" stroke="#fff" strokeWidth="2.200"/>
		<path d={band( outerTop.slice( 0, 13 ), outerBottom )} fill="url(#outer)"/>
		<path d={curve( outerTop )} fill="none" stroke="#fff" strokeWidth="2.200"/>
		<path d="M699 232l14 11" stroke="#fff" strokeWidth="4"/>
		<path d="M515 340l27 12 14 9-7-2-20-10z" fill="#f3f3f3"/>
		<circle cx="542" cy="352.500" r="1.500" fill="#222"/>
		<path d="M681 222h5l11 6v5l-14-8z" fill="#fff"/>
		<path d="M682 226l15 9" stroke="#bbb" fill="none"/>
		<g strokeLinecap="round" fill="none">
			<path d="M538.500 373.500l11-2" stroke="#e8e8e8" strokeWidth="6"/>
			<path d="M538.500 375.500l10-2" stroke="#b9b9b9" strokeWidth="1.500"/>
			<path d="M726 364.500l6 4" stroke="#f3f3f3" strokeWidth="6.500"/>
			<path d="M738 256l3-1" stroke="#e2e2e2" strokeWidth="4.500"/>
		</g>
		<path d="M482 333l4-1 12 7v5h-4l-12-7z" fill="#f1f1f1"/>
		<path d="M486 332l6 4 1-2 4 4" stroke="#777" fill="none"/>
		<path d="M675 337l17-8v10l-17 9z" fill="#6b6b6a"/>
		<path d="M670 334l5 2v13l-5-1.500z" fill="#eee"/>
		<path d="M670 334l18-10 5 2-17 10z" fill="#f5f5f5"/>
		<path d="M674 333l3-1M678 333l2-3M682 329l4-1M684 332l3-2M688 327l3 0M676 330l2 1M681 327l2 1" stroke="#444" strokeWidth="1"/>
		<path d="M480.500 441v32" stroke="#0c4cc0" strokeWidth="3.500"/>
		<path d="M481 472l-29 17" stroke="#d8252b" strokeWidth="4"/>
		<path d="M481 472l-29 15" stroke="#f07070" strokeWidth="1"/>
		<path d="M482 473l28 16" stroke="#37d837" strokeWidth="3"/>
		<circle cx="480" cy="440.500" r="1.500" fill="#fff"/>
		<text x="478" y="437" fontSize="17" fill="#2e5fc8">Z</text>
		<text x="448" y="486" fontSize="16" fill="#d03030">X</text>
		<text x="507" y="487" fontSize="16" fill="#2f8f35">Y</text>

		<ellipse cx="776.500" cy="152" rx="30" ry="18" fill="none" stroke="#4a515a" strokeWidth="7"/>
		<g className="compass">
			<g fontSize="9" fill="#c3c6c9">
				<text transform="translate(748 164) rotate(30)">E</text>
				<text transform="translate(799 170) rotate(-40)">N</text>
				<text transform="translate(752 139) rotate(-10)">S</text>
				<text transform="translate(795 136) rotate(35)">W</text>
			</g>
			<path d="M777 118l18 9-18 10-18-10z" fill="#c9cacc" stroke="#888"/>
			<path d="M759 127l18 10v22l-18-10z" fill="#b3b5b8" stroke="#888"/>
			<path d="M795 127l-18 10v22l18-11z" fill="#a6a8ab" stroke="#888"/>
			<g fontSize="5" fill="#222">
				<text transform="matrix(.86 .5 0 1 761 141)">RIGHT</text>
				<text transform="matrix(.86 -.5 0 1 779 149)">BACK</text>
				<text transform="matrix(.86 -.4 .6 .5 773 130)">TOP</text>
			</g>
		</g>
	</Drawing>
)

const WcsButton = styled.button`
	position: absolute;
	top: 90px;
	right: 24px;
	display: flex;
	align-items: center;
	justify-content: space-between;
	width: 40px;
	height: 14px;
	border: 1px solid #b0b3bb;
	border-radius: 3px;
	background-color: #8d909c;
	color: #4b4e58;
	font-size: 10px;
	line-height: 12px;
	padding: 0 4px 0 3px;
`

const NavDrawing = () => (
	<svg width="27" height="203" viewBox="0 0 27 203" fill="none" stroke="#444951" strokeWidth="1" aria-hidden="true">
		<circle cx="22" cy="5" r="2.500"/>
		<path d="M5 20l9-4 9 4v11l-9 5-9-5zM5 20l9 4 9-4M14 24v12M8 26l3 2M17 28l3-2"/>
		<circle cx="14" cy="50" r="9"/>
		<circle cx="14" cy="50" r="5"/>
		<path d="M17 41h6v6M11 47h6v6h-6z"/>
		<path d="M12 66h4l-2 2zM12 124h4l-2 2zM12 157h4l-2 2z" fill="#3f444c"/>
		<path d="M10 94l-6-8c0-2 2-2 3-1l2 2-3-8c0-2 2-2 3 0l2 5-1-9c1-2 2-2 3 0l1 8 2-7c1-2 3-1 2 1l-1 8 3-5c2-1 3 0 2 2l-5 12z"/>
		<path d="M5 100l16 14M20 100L5 114M5 104v-4h4M16 100h4v4M5 110v4h4"/>
		<circle cx="19" cy="112" r="4" fill="#5c616a"/>
		<path d="M22 115l3 3"/>
		<ellipse cx="14" cy="142" rx="9" ry="4"/>
		<path d="M12 150v-14h-2l4-4 3 4h-2v14zM8 142l-4 3 4 3"/>
		<rect x="4" y="166" width="6" height="5"/>
		<rect x="11" y="166" width="5" height="5"/>
		<rect x="17" y="166" width="6" height="5"/>
		<path d="M4 174h14v11H4z"/>
		<path d="M8 176l6 3-6 4z" fill="#3f444c"/>
		<circle cx="22" cy="197" r="2.500"/>
	</svg>
)

const App = () => (
	<Shell>
		<GlobalStyle/>

		<TitleBar>
			<Title>careta_0.2.dwg</Title>
			<WindowButtons>
				{[ 'M4 8h9', 'M4 4h8v8H4z', 'M4 4l8 8M12 4l-8 8' ].map( ( d, i ) => (
					<WindowButton key={d} aria-label={[ 'Minimize', 'Maximize', 'Close' ][i]}>
						<Glyph $size={16} viewBox="0 0 16 16"><path d={d} fill="none" stroke="#888"/></Glyph>
					</WindowButton>
				) )}
			</WindowButtons>
		</TitleBar>
		<AppButton aria-label="Application menu"><Logo/></AppButton>

		<MenuBar>
			{menus.map( parts => (
				<MenuItem key={parts.join( '' )}>
					{parts.length === 3 ? <>{parts[0]}<u>{parts[1]}</u>{parts[2]}</> : <><u>{parts[0]}</u>{parts[1]}</>}
				</MenuItem>
			) )}
			<MdiButtons>
				{[ 'M1 7.500h8', 'M1 4h6v5H1zM3.500 4V1h6v5H7', 'M2 2l6 6M8 2L2 8' ].map( ( d, i ) => (
					<button key={d} aria-label={[ 'Minimize drawing', 'Restore drawing', 'Close drawing' ][i]}>
						<Glyph $size={10} viewBox="0 0 10 10"><path d={d} fill="none" stroke="#111" strokeWidth="1.600"/></Glyph>
					</button>
				) )}
			</MdiButtons>
		</MenuBar>

		<ToolRow $height={21}>
			<Grip/>
			<Panel><Tools items={standard}/></Panel>
			<Grip/>
			<Panel><Tools items={dimension}/></Panel>
		</ToolRow>

		<ToolRow $height={24}>
			<Grip/>
			<Panel>
				<Combo>
					<Select aria-label="Workspace"><option>Mechanical Classic</option></Select>
					<Chevron/>
				</Combo>
				<Tools items={[ 'gear', 'workspace' ]}/>
			</Panel>
			<Grip/>
			<Panel $shrink>
				<Tools items={[ 'layers', 'screen' ]}/>
				<Combo $wide>
					{[ 'bulb', 'sun', 'vpFreeze', 'unlock', 'swatch' ].map( name => <Icon key={name} name={name}/> )}
					<Select aria-label="Layer"><option>0</option></Select>
					<Chevron/>
				</Combo>
				<Tools items={[ 'layerSt', 'layerPrev' ]}/>
			</Panel>
			<Grip/>
			<Panel><Tools items={[ 'center', 'centerEd', '|', 'bom', '|', 'partRef', 'partList', 'balloon' ]}/></Panel>
		</ToolRow>

		<Workspace>
			<Side items={draw} width={21} height="71%"/>
			<Side items={modify} width={19} height="100%"/>

			<Canvas>
				<Views>
					<View $active $order={1}>
						<FrontDrawing/>
						<ViewLabel>[+][Front][2D Wireframe]</ViewLabel>
						<NavBar><NavDrawing/></NavBar>
					</View>
					<View $tall $order={2}>
						<SolidDrawing/>
						<ViewLabel>[+][NE Isometric][Realistic]</ViewLabel>
						<WcsButton>
							WCS
							<Glyph $size={8} viewBox="0 0 8 8"><path d="M0 3.500h3M5 3.500h3" stroke="#b5b8c0"/></Glyph>
						</WcsButton>
					</View>
					<View $order={3}>
						<TopDrawing/>
						<ViewLabel>[+][Top][2D Wireframe]</ViewLabel>
					</View>
				</Views>

				<VScroll>
					<ScrollButton aria-label="Scroll up"><Chevron turn={180}/></ScrollButton>
					<ThumbTrack $vertical><Thumb $offset="52px 0 0 1px"/></ThumbTrack>
					<ScrollButton aria-label="Scroll down"><Chevron/></ScrollButton>
				</VScroll>

				<BottomRow>
					{[ 'M3 1v8M8 1L4 5l4 4z', 'M7 1L3 5l4 4z', 'M3 1l4 4-4 4z', 'M7 1v8M2 1l4 4-4 4z' ].map( ( d, i ) => (
						<TabNav key={d} aria-label={[ 'First tab', 'Previous tab', 'Next tab', 'Last tab' ][i]}>
							<Glyph $size={8} viewBox="0 0 10 10"><path d={d} fill="#555" stroke="#555"/></Glyph>
						</TabNav>
					) )}
					<Tab $active>Model</Tab>
					<Tab>Layout1</Tab>
					<TabSlash/>
					<HScroll>
						<ScrollButton aria-label="Scroll left"><Chevron turn={90}/></ScrollButton>
						<ThumbTrack><Thumb $offset="0 0 0 170px"/></ThumbTrack>
						<ScrollButton aria-label="Scroll right"><Chevron turn={-90}/></ScrollButton>
					</HScroll>
				</BottomRow>

				<CommandLine onSubmit={e => e.preventDefault()}>
					<CommandTools>
						<Glyph $size={6} viewBox="0 0 6 6"><path d="M1 0v6M4 0v6" stroke="#aaa" strokeDasharray="1 1"/></Glyph>
						<CommandButton type="button" aria-label="Close command line">
							<Glyph $size={12} viewBox="0 0 16 16"><path d="M4 4l8 8M12 4l-8 8" stroke="#ddd" strokeWidth="2"/></Glyph>
						</CommandButton>
						<CommandButton type="button" aria-label="Customize"><Icon name="wrench" size={12}/></CommandButton>
					</CommandTools>
					<CommandButton type="button" aria-label="Recent commands"><Glyph $size={22} viewBox="-3 -3 22 22">{icons.prompt}<path d="M16 6h3l-1.500 2z" fill="#444"/></Glyph></CommandButton>
					<CommandInput aria-label="Command" placeholder="Type a command"/>
					<CommandButton type="button" aria-label="History"><Glyph $size={12} viewBox="0 0 16 16"><path d="M3 10h8L7 6z" fill="#111"/></Glyph></CommandButton>
				</CommandLine>

				<Watermark>
					<WatermarkTitle>Activate Windows</WatermarkTitle>
					<WatermarkText>Go to Settings to activate Windows.</WatermarkText>
				</Watermark>
			</Canvas>
		</Workspace>

		<StatusBar>
			<Coords>644.1769, 339.8959, 92.7198</Coords>
			<StatusGroup $width={240}>
				{toggles.map( name => (
					<StatusButton key={name} aria-label={name} $on={toggled.includes( name )}><Icon name={name}/></StatusButton>
				) )}
			</StatusGroup>
			<StatusGroup><StatusButton $text>STRUCT</StatusButton></StatusGroup>
			<StatusGroup $end>
				<StatusButton $text>MODEL</StatusButton>
				<StatusButton aria-label="Model space"><Icon name="modelSp"/></StatusButton>
				<StatusButton aria-label="Quick view layouts"><Icon name="layouts"/></StatusButton>
			</StatusGroup>
			<StatusGroup $gap={15} $width={54}>
				<StatusButton aria-label="Settings"><Icon name="gear"/></StatusButton>
				<StatusButton aria-label="Unlock"><Icon name="unlock"/></StatusButton>
				<StatusButton aria-label="Annotation"><Icon name="annot"/></StatusButton>
			</StatusGroup>
			<Tray><Icon name="tray"/><Icon name="bulb"/></Tray>
			<StatusGroup $gap={1}>
				<StatusButton aria-label="Status bar menu"><Icon name="caret" size={8}/></StatusButton>
			</StatusGroup>
			<ResizeGrip/>
		</StatusBar>
	</Shell>
)

export default App
